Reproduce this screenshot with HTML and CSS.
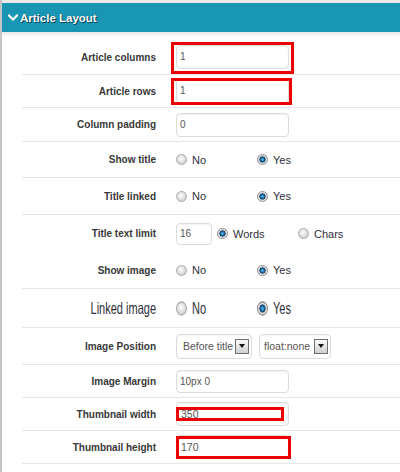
FILE: index.html
```html
<!DOCTYPE html>
<html>
<head>
<meta charset="utf-8">
<link rel="stylesheet" href="styles.css">
</head>
<body>
<div class="frame">
  <div class="head">
    <svg class="chev" width="10" height="8" viewBox="0 0 10 8"><path d="M1 1.5 L5 5.5 L9 1.5" fill="none" stroke="#fff" stroke-width="2.2" stroke-linecap="square"/></svg>
    <span>Article Layout</span>
  </div>
  <div class="band"></div>
  <div class="body">
    <div class="row h35">
      <div class="lbl">Article columns</div>
      <div class="ctl"><div class="input mk mk1">1</div></div>
    </div>
    <div class="row h33">
      <div class="lbl">Article rows</div>
      <div class="ctl"><div class="input mk mk2">1</div></div>
    </div>
    <div class="row h34">
      <div class="lbl">Column padding</div>
      <div class="ctl"><div class="input">0</div></div>
    </div>
    <div class="row h36">
      <div class="lbl">Show title</div>
      <div class="ctl opts">
        <span class="opt"><span class="radio"></span>No</span>
        <span class="opt"><span class="radio on"></span>Yes</span>
      </div>
    </div>
    <div class="row h37">
      <div class="lbl">Title linked</div>
      <div class="ctl opts">
        <span class="opt"><span class="radio"></span>No</span>
        <span class="opt"><span class="radio on"></span>Yes</span>
      </div>
    </div>
    <div class="row h37 nb">
      <div class="lbl">Title text limit</div>
      <div class="ctl opts">
        <div class="input short">16</div>
        <span class="opt"><span class="radio on"></span>Words</span>
        <span class="opt"><span class="radio"></span>Chars</span>
      </div>
    </div>
    <div class="row h37">
      <div class="lbl">Show image</div>
      <div class="ctl opts">
        <span class="opt"><span class="radio"></span>No</span>
        <span class="opt"><span class="radio on"></span>Yes</span>
      </div>
    </div>
    <div class="row h39">
      <div class="lbl thin"><span class="stretch">Linked image</span></div>
      <div class="ctl opts">
        <span class="opt"><span class="radio tall"></span><span class="stretch">No</span></span>
        <span class="opt"><span class="radio on tall"></span><span class="stretch">Yes</span></span>
      </div>
    </div>
    <div class="row h37">
      <div class="lbl">Image Position</div>
      <div class="ctl sels">
        <div class="sel w76"><span>Before title</span><span class="arrow"></span></div>
        <div class="sel w72"><span>float:none</span><span class="arrow"></span></div>
      </div>
    </div>
    <div class="row h33">
      <div class="lbl">Image Margin</div>
      <div class="ctl"><div class="input sm">10px 0</div></div>
    </div>
    <div class="row h33">
      <div class="lbl">Thumbnail width</div>
      <div class="ctl"><div class="input mk mk3">350</div></div>
    </div>
    <div class="row h33">
      <div class="lbl">Thumbnail height</div>
      <div class="ctl"><div class="input mk mk4">170</div></div>
    </div>
  </div>
</div>
</body>
</html>
```
FILE: styles.css
```css
* { box-sizing: border-box; }
html, body { margin: 0; background: #fff; }
body { font-family: "Liberation Sans", Arial, sans-serif; color: #333; }

.frame {
  width: 400px;
  height: 472px;
  overflow: hidden;
  border-left: 2px solid #c4c4c4;
  padding-top: 3px;
  background: linear-gradient(#f0f0f0, #e4e4e4) top left / 100% 3px no-repeat, #fff;
}

.head {
  height: 29px;
  background: #1996b3;
  display: flex;
  align-items: center;
  gap: 2px;
  padding-left: 6px;
  color: #fff;
  font-weight: bold;
  font-size: 11.5px;
  text-shadow: 1px 1px 0 #0b4656, 0 0 1px #0b4656;
}
.chev { display: block; margin-top: 1px; }

.band { height: 5px; background: linear-gradient(#e9e9e9, #fbfbfb); }
.body { padding-top: 3px; }

.row {
  display: grid;
  grid-template-columns: 134px 1fr;
  column-gap: 20px;
  align-items: center;
  margin-left: 20px;
  border-bottom: 1px solid #e6e6e6;
}
.row.nb { border-bottom: none; }
.h33 { height: 33px; }
.h34 { height: 34px; }
.h35 { height: 35px; }
.h36 { height: 36px; }
.h37 { height: 37px; }
.h39 { height: 39px; }

.lbl {
  text-align: right;
  font-weight: bold;
  font-size: 10px;
  color: #383838;
}
.lbl.thin { font-weight: normal; font-size: 11px; color: #2e2e3a; }
.stretch { display: inline-block; transform: scaleY(1.5); }

.ctl { display: flex; align-items: center; }

.input {
  width: 113px;
  height: 24px;
  border: 1px solid #dcdcdc;
  border-radius: 4px;
  box-shadow: inset 0 1px 2px rgba(0,0,0,0.06);
  font-size: 10px;
  line-height: 22px;
  color: #555;
  padding-left: 3px;
  background: #fff;
}
.input.sm { height: 23px; line-height: 21px; }
.input.short { width: 36px; height: 22px; line-height: 20px; margin-right: 5px; }

.opt {
  width: 81px;
  display: flex;
  align-items: center;
  gap: 5px;
  font-size: 11px;
  color: #2e2e3a;
}
.radio {
  width: 11px;
  height: 11px;
  border-radius: 50%;
  border: 1px solid #a9a9a9;
  background: radial-gradient(circle at 45% 40%, #fcfcfc 0, #e6e6e6 3px, #c9c9c9 6px);
  flex: none;
}
.radio.on {
  border-color: #8d8d8d;
  background: radial-gradient(circle at 50% 50%, #6cc3f0 0, #1b78b5 1.6px, #10385a 2.8px, #d8d8d8 3.4px, #eeeeee 5px);
}
.radio.tall { transform: scaleY(1.3); }

.sels { gap: 7px; }
.sel {
  height: 25px;
  border: 1px solid #dcdcdc;
  border-radius: 4px;
  display: flex;
  align-items: center;
  justify-content: space-between;
  padding: 0 2px 0 6px;
  font-size: 10.5px;
  color: #555;
  box-shadow: inset 0 1px 2px rgba(0,0,0,0.05);
}
.w76 { width: 76px; }
.w72 { width: 72px; padding-left: 4px; }
.arrow {
  width: 14px;
  height: 15px;
  border: 1px solid #6f6f6f;
  background: linear-gradient(#fbfbfb, #cfcfcf);
  display: flex;
  align-items: center;
  justify-content: center;
}
.arrow::before {
  content: "";
  border-left: 3.5px solid transparent;
  border-right: 3.5px solid transparent;
  border-top: 4px solid #111;
}

.mk { position: relative; }
.mk::after {
  content: "";
  position: absolute;
  border: 3px solid #ee0000;
}
.mk1::after { top: -4px; bottom: -6px; left: -6px; right: -6px; }
.mk2::after { top: -2px; bottom: -3px; left: -6px; right: -4px; }
.mk3::after { top: 4px; bottom: 4px; left: -1px; right: 4px; }
.mk4::after { top: 0; bottom: -1px; left: -1px; right: -3px; }
.mk3, .mk4 { padding-left: 4px; font-size: 10.5px; }
```
